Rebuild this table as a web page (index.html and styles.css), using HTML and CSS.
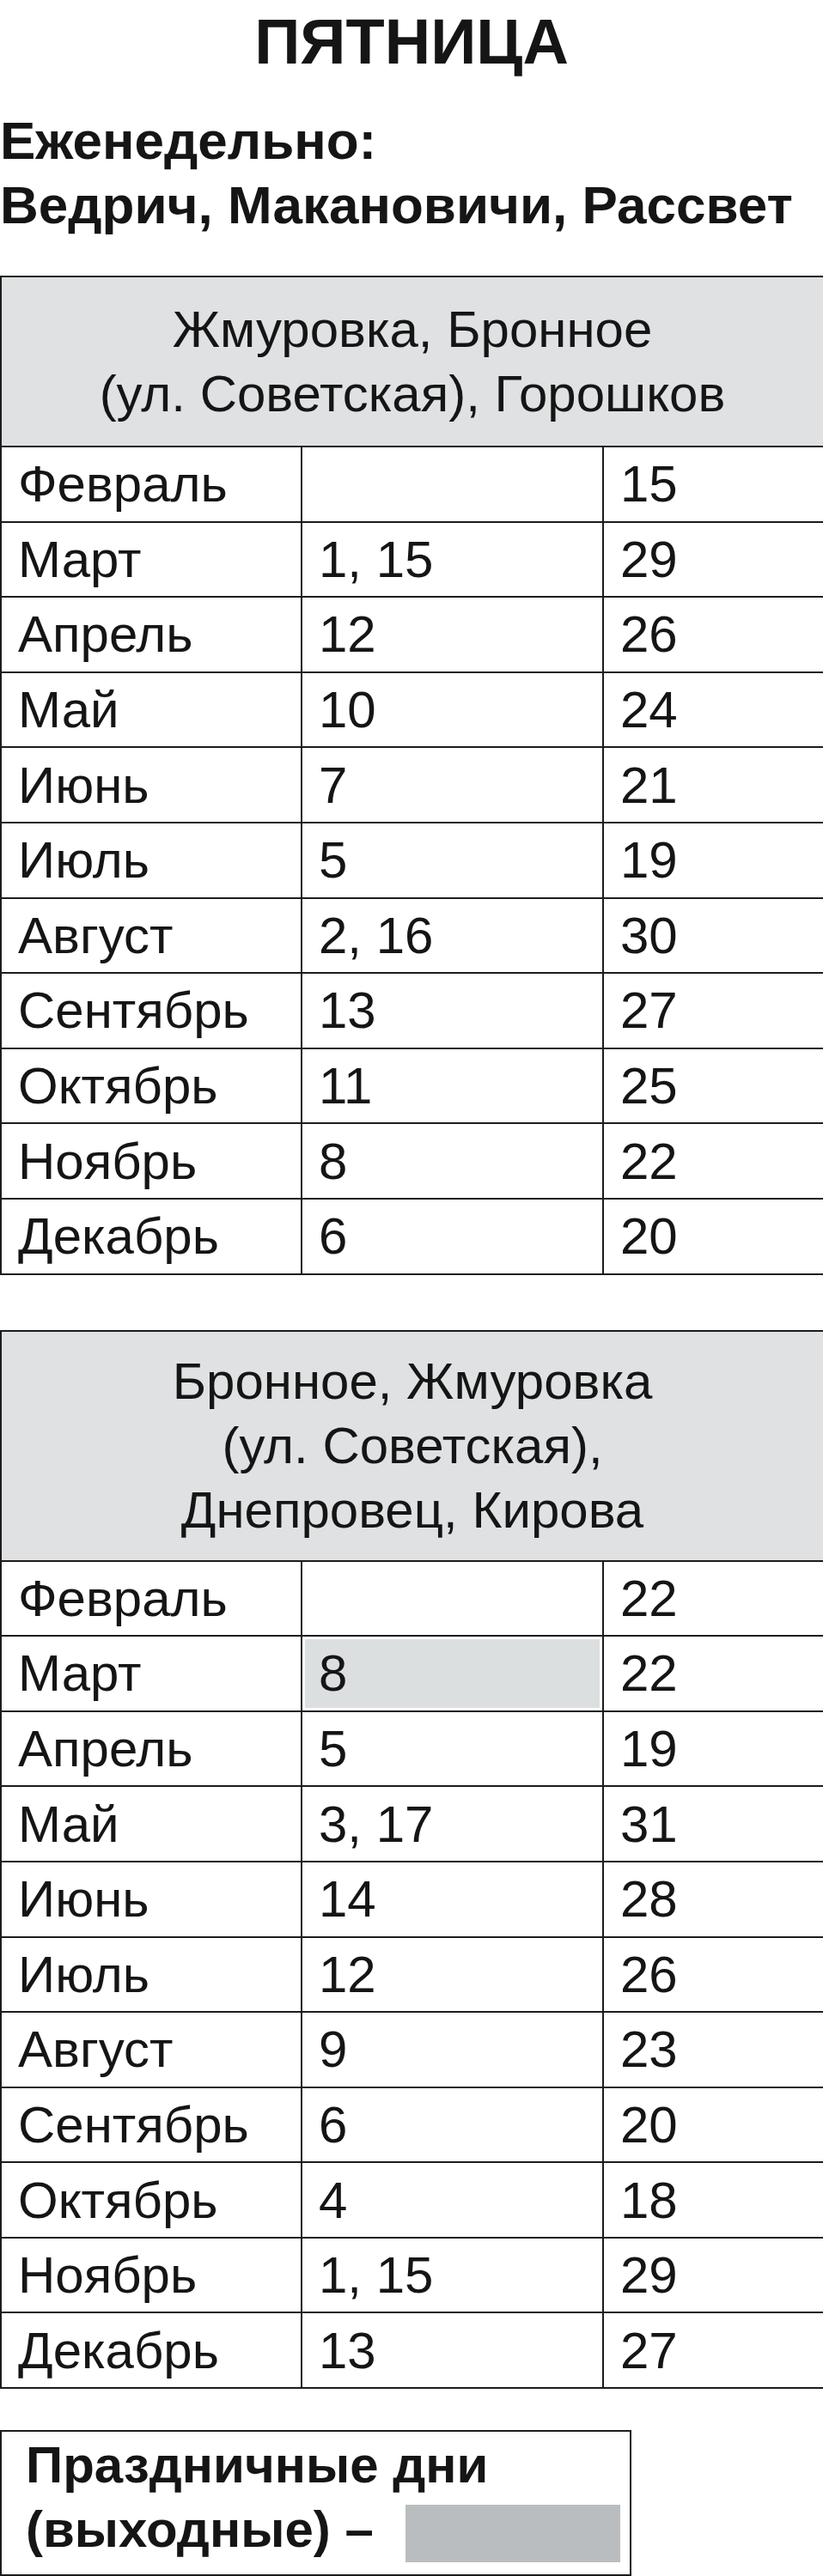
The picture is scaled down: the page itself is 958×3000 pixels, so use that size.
FILE: index.html
```
<!DOCTYPE html>
<html lang="ru">
<head>
<meta charset="utf-8">
<title>Пятница</title>
<link rel="stylesheet" href="styles.css">
</head>
<body>
<h1 class="title">ПЯТНИЦА</h1>
<p class="weekly">Еженедельно:<br>Ведрич, Макановичи, Рассвет</p>

<table class="sched sched-first">
  <colgroup><col class="c1"><col class="c2"><col class="c3"></colgroup>
  <tr class="head"><th colspan="3">Жмуровка, Бронное<br>(ул. Советская), Горошков</th></tr>
  <tr><td>Февраль</td><td></td><td>15</td></tr>
  <tr><td>Март</td><td>1, 15</td><td>29</td></tr>
  <tr><td>Апрель</td><td>12</td><td>26</td></tr>
  <tr><td>Май</td><td>10</td><td>24</td></tr>
  <tr><td>Июнь</td><td>7</td><td>21</td></tr>
  <tr><td>Июль</td><td>5</td><td>19</td></tr>
  <tr><td>Август</td><td>2, 16</td><td>30</td></tr>
  <tr><td>Сентябрь</td><td>13</td><td>27</td></tr>
  <tr><td>Октябрь</td><td>11</td><td>25</td></tr>
  <tr><td>Ноябрь</td><td>8</td><td>22</td></tr>
  <tr><td>Декабрь</td><td>6</td><td>20</td></tr>
</table>

<table class="sched sched-second">
  <colgroup><col class="c1"><col class="c2"><col class="c3"></colgroup>
  <tr class="head head-tall"><th colspan="3">Бронное, Жмуровка<br>(ул. Советская),<br>Днепровец, Кирова</th></tr>
  <tr><td>Февраль</td><td></td><td>22</td></tr>
  <tr><td>Март</td><td class="holiday">8</td><td>22</td></tr>
  <tr><td>Апрель</td><td>5</td><td>19</td></tr>
  <tr><td>Май</td><td>3, 17</td><td>31</td></tr>
  <tr><td>Июнь</td><td>14</td><td>28</td></tr>
  <tr><td>Июль</td><td>12</td><td>26</td></tr>
  <tr><td>Август</td><td>9</td><td>23</td></tr>
  <tr><td>Сентябрь</td><td>6</td><td>20</td></tr>
  <tr><td>Октябрь</td><td>4</td><td>18</td></tr>
  <tr><td>Ноябрь</td><td>1, 15</td><td>29</td></tr>
  <tr><td>Декабрь</td><td>13</td><td>27</td></tr>
</table>

<div class="legend">Праздничные дни<br>(выходные) –<span class="swatch"></span></div>
</body>
</html>
```
FILE: styles.css
```
html, body {
  margin: 0;
  padding: 0;
  background: #ffffff;
}

body {
  width: 958px;
  font-family: "Liberation Sans", Arial, sans-serif;
  color: #151515;
}

.title {
  margin: 0;
  padding-top: 9px;
  font-size: 74px;
  line-height: 80px;
  font-weight: 700;
  text-align: center;
}

.weekly {
  margin: 37px 0 0 0;
  font-size: 62px;
  line-height: 75px;
  font-weight: 700;
}

.sched {
  width: 958px;
  border-collapse: collapse;
  table-layout: fixed;
  font-size: 60px;
  line-height: 75px;
}

.sched-first {
  margin-top: 45px;
}

.sched-second {
  margin-top: 64px;
}

.c1 { width: 350px; }
.c2 { width: 351px; }
.c3 { width: 257px; }

.sched th,
.sched td {
  border: 2px solid #1c1c1c;
  padding: 0 0 0 19px;
  text-align: left;
  vertical-align: middle;
  font-weight: 400;
  white-space: nowrap;
}

.sched tr {
  height: 87.6px;
}

.sched tr.head {
  height: 198px;
}

.sched tr.head-tall {
  height: 268px;
}

.sched th {
  background: #dfe1e2;
  text-align: center;
  padding: 0;
}

.sched td.holiday {
  background: #dcdfe0;
  box-shadow: inset 0 0 0 3px #ffffff;
}

.legend {
  box-sizing: border-box;
  width: 735px;
  margin-top: 48px;
  padding: 1px 0 14px 28px;
  border: 2px solid #1c1c1c;
  font-size: 60px;
  line-height: 75px;
  font-weight: 700;
}

.swatch {
  display: inline-block;
  width: 250px;
  height: 67px;
  margin-left: 37px;
  vertical-align: -18px;
  background: #babdbf;
}
```
